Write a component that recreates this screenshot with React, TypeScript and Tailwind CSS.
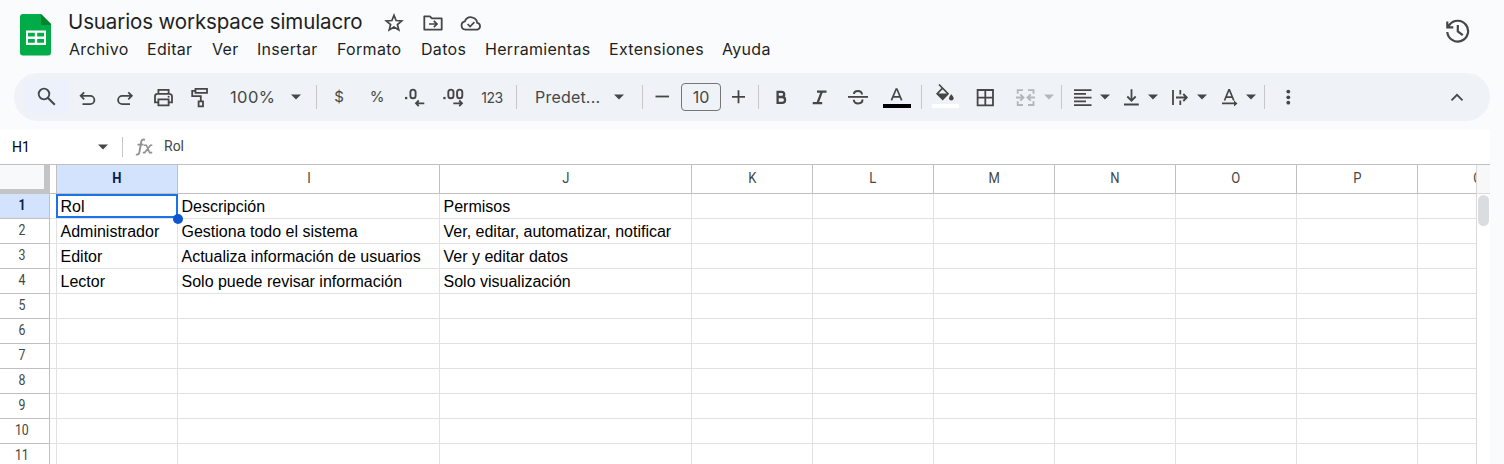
import React from "react";

type IconProps = { children: React.ReactNode; className?: string; w?: number; h?: number };

const Icon = ({ children, className = "", w = 24, h = 24 }: IconProps) => (
  <svg
    width={w}
    height={h}
    viewBox={`0 0 ${w} ${h}`}
    fill="none"
    stroke="currentColor"
    strokeWidth="1.8"
    className={`shrink-0 ${className}`}
  >
    {children}
  </svg>
);

const Caret = ({ className = "" }: { className?: string }) => (
  <Icon w={10} h={6} className={className}>
    <path d="M0 .5h10L5 5.5z" fill="currentColor" stroke="none" />
  </Icon>
);

const Divider = ({ className = "" }: { className?: string }) => (
  <div className={`h-6 w-px shrink-0 bg-[#c7c7c7] ${className}`} />
);

const menus = [
  { label: "Archivo", cls: "w-[78px]" },
  { label: "Editar", cls: "w-[65px]" },
  { label: "Ver", cls: "w-[45px]" },
  { label: "Insertar", cls: "w-[80px]" },
  { label: "Formato", cls: "w-[84px]" },
  { label: "Datos", cls: "w-[64px]" },
  { label: "Herramientas", cls: "w-[124px]" },
  { label: "Extensiones", cls: "w-[113px]" },
  { label: "Ayuda", cls: "w-[60px]" },
];

const columns = [
  { name: "H", cls: "w-[121px]" },
  { name: "I", cls: "w-[262px]" },
  { name: "J", cls: "w-[252px]" },
  { name: "K", cls: "w-[121px]" },
  { name: "L", cls: "w-[121px]" },
  { name: "M", cls: "w-[121px]" },
  { name: "N", cls: "w-[121px]" },
  { name: "O", cls: "w-[121px]" },
  { name: "P", cls: "w-[121px]" },
  { name: "Q", cls: "w-[121px]" },
];

const data: string[][] = [
  ["Rol", "Descripción", "Permisos"],
  ["Administrador", "Gestiona todo el sistema", "Ver, editar, automatizar, notificar"],
  ["Editor", "Actualiza información de usuarios", "Ver y editar datos"],
  ["Lector", "Solo puede revisar información", "Solo visualización"],
];

const rows = Array.from({ length: 11 }, (_, i) => i);

function Header() {
  return (
    <header className="flex h-[73px] items-start">
      <Icon w={31} h={42} className="ml-5 mt-[14px]">
        <path d="M3 0h18l10 10v28.500a3 3 0 0 1-3 3H3a3 3 0 0 1-3-3V3a3 3 0 0 1 3-3z" fill="#00ac47" stroke="none" />
        <path d="M21 0l10 10v1H21z" fill="#00832d" stroke="none" />
        <path d="M6 16.500h20V31H6zM8 18.700v3.800h6.800v-3.800zM17.200 18.700v3.800H24v-3.800zM8 24.900v3.800h6.800v-3.800zM17.200 24.900v3.800H24v-3.800z" fill="#fff" fillRule="evenodd" stroke="none" />
      </Icon>
      <div className="ml-[17px] flex flex-col">
        <div className="flex h-9 items-center pt-[7px]">
          <h1 className="w-[315px] whitespace-nowrap text-[20.500px] leading-7 tracking-[-0.12px] text-[#1f1f1f]">
            Usuarios workspace simulacro
          </h1>
          <div className="flex items-center text-[#444746]">
            <Icon className="-ml-px mt-[3px]">
              <path d="M12 4.300l2.100 5.200 5.600.4-4.300 3.600 1.400 5.500-4.800-3-4.800 3 1.400-5.500-4.300-3.600 5.600-.4z" strokeWidth="1.700" />
            </Icon>
            <Icon className="ml-[15px] mt-[3px]">
              <path d="M3.300 5.400h5.600l2 2h9.800v11.200H3.300z" strokeWidth="1.800" strokeLinejoin="round" />
              <path d="M8 13h7.500M12.800 9.800l3.200 3.200-3.200 3.200" strokeWidth="1.700" />
            </Icon>
            <Icon className="ml-[14px] mt-[3px]">
              <path d="M6.500 18.600a4.200 4.200 0 0 1-.6-8.300 6.400 6.400 0 0 1 12.300 1.500 3.500 3.500 0 0 1 .3 6.800z" strokeWidth="1.800" />
              <path d="M8.600 13l2.500 2.500 4.300-4.400" strokeWidth="1.600" />
            </Icon>
          </div>
        </div>
        <nav className="flex pl-px pt-px text-[16px] leading-6 tracking-[0.3px] text-[#1f1f1f]">
          {menus.map((m) => (
            <span key={m.label} className={`shrink-0 whitespace-nowrap ${m.cls}`}>
              {m.label}
            </span>
          ))}
        </nav>
      </div>
      <Icon w={26} h={26} className="ml-auto mr-[34px] mt-[18px] text-[#444746]">
        <path d="M3.300 14a10.400 10.400 0 1 0 2.200-7.300L3 9.500M3.300 3.400v6h6" strokeWidth="2.200" />
        <path d="M13.800 7v6.500l5 3.600" strokeWidth="2.200" />
      </Icon>
    </header>
  );
}

function Toolbar() {
  return (
    <div className="ml-[14px] flex h-12 w-[1476px] items-center rounded-full bg-[#eff3f8] text-[#444746]">
      <div className="ml-[11px] flex h-[34px] w-11 items-center justify-center bg-[#ecf1fb]">
        <Icon>
          <circle cx="9" cy="9" r="5.300" />
          <path d="M12.800 12.800l7 7" strokeWidth="2" />
        </Icon>
      </div>
      <Icon className="ml-[6px]">
        <path d="M9.200 7.300L5.700 10.800l3.500 3.500M6 10.800h9.200a4.200 4.200 0 0 1 0 8.400H7.500" />
      </Icon>
      <Icon className="ml-[14px]">
        <path d="M15.300 7.300l3.500 3.500-3.500 3.500M18.500 10.800H9.300a4.200 4.200 0 0 0 0 8.400h7.700" />
      </Icon>
      <Icon className="ml-[14px]">
        <path d="M7.400 8.700V4.900h10.200v3.800M7.400 17.300H4V11.300a2.500 2.500 0 0 1 2.500-2.500h12a2.500 2.500 0 0 1 2.500 2.500v6h-3.400M7.400 14.400h10.200v6H7.400z" />
        <circle cx="17.600" cy="11.800" r="1" fill="currentColor" stroke="none" />
      </Icon>
      <Icon className="ml-3">
        <path d="M8.500 3.900H20v4H8.500zM8.500 5.900H5.200v5.200h8.600v5M11.600 16.300H16v5h-4.400z" />
      </Icon>
      <span className="ml-[19px] w-[45px] text-[16.500px] tracking-[0.4px]">100%</span>
      <Caret className="ml-4" />
      <Divider className="ml-[15px]" />
      <span className="ml-[10px] w-6 text-center text-[15px]">$</span>
      <span className="ml-[14px] w-6 text-center text-[15px]">%</span>
      <Icon className="ml-[14px]">
        <path d="M2 11.900h2.300v2.300H2z" fill="currentColor" stroke="none" />
        <rect x="7.400" y="4.600" width="5.200" height="8.700" rx="2.600" strokeWidth="1.900" />
        <path d="M21.300 18.300h-8M15.800 15.500L13 18.300l2.800 2.800" />
      </Icon>
      <Icon className="ml-[15px]">
        <path d="M1.300 11.900h2.300v2.300H1.300z" fill="currentColor" stroke="none" />
        <rect x="6.300" y="4.600" width="5.200" height="8.700" rx="2.600" strokeWidth="1.900" />
        <rect x="15.100" y="4.600" width="5.200" height="8.700" rx="2.600" strokeWidth="1.900" />
        <path d="M11.300 18.300h8.500M17.200 15.500l2.800 2.800-2.800 2.800" />
      </Icon>
      <span className="ml-[14px] flex w-6 justify-center text-[14px] tracking-[-0.4px]">123</span>
      <Divider className="ml-3" />
      <span className="ml-[18px] w-[67px] whitespace-nowrap text-[16px] tracking-[0.2px]">Predet...</span>
      <Caret className="ml-3" />
      <Divider className="ml-[18px]" />
      <Icon className="ml-[7px]">
        <path d="M5.500 11.500h13.500" />
      </Icon>
      <span className="ml-[7px] flex h-7 w-10 items-center justify-center rounded-[4px] border border-[#747775] text-[16px]">
        10
      </span>
      <Icon className="ml-[5px]">
        <path d="M6 11.800h13M12.500 5.300v13" />
      </Icon>
      <Divider className="ml-2" />
      <Icon className="ml-[10px]">
        <path d="M8.600 6.800h4a2.600 2.600 0 0 1 0 5.200h-4zM8.600 12h4.600a2.900 2.900 0 0 1 0 5.800H8.600z" strokeWidth="2.300" />
      </Icon>
      <Icon className="ml-[14px]">
        <path d="M10 6.600h9.500M5.700 18.200h9.500M14.800 6.600l-4.300 11.600" strokeWidth="2.300" />
      </Icon>
      <Icon className="ml-[15px]">
        <path d="M2 11.900h20" />
        <path d="M16 9.400c0-1.800-1.500-3.400-4-3.400S8 7.500 8 9.100M7.800 14.800c0 2 1.700 3.700 4.300 3.700s4.400-1.400 4.400-3.900" strokeWidth="2" />
      </Icon>
      <Icon w={28} h={28} className="ml-[13px]">
        <path d="M8.400 17.300L13.200 6h.7L18.700 17.300M9.800 13.800h7.500" strokeWidth="1.700" />
        <path d="M0 21h28v4H0z" fill="#000" stroke="none" />
      </Icon>
      <Divider className="ml-[10px]" />
      <Icon w={27} h={28} className="ml-[10px]">
        <path d="M7 1.500l9 9.200-5.300 5.500-5.500-5.500 5.300-5.500" strokeWidth="1.700" />
        <path d="M4.800 10.500h11.500l-5.600 5.900z" fill="currentColor" stroke="none" />
        <path d="M19.300 11.200s2.300 2.500 2.300 4a2.300 2.300 0 0 1-4.600 0c0-1.500 2.300-4 2.300-4z" fill="currentColor" stroke="none" />
        <path d="M0 21h27v4H0z" fill="#fff" stroke="none" />
      </Icon>
      <Icon className="ml-[14px]">
        <path d="M4.600 5h15.400v15.400H4.600zM12.300 5v15.400M4.600 12.700h15.400" />
      </Icon>
      <Icon className="ml-4 text-[#b4b7ba]">
        <path d="M10 5.100H4.700V8.800M15 5.100h5.500V8.800M10 20H4.700V16.200M15 20h5.500V16.200M3 12.500h7M7.300 9.300l3.200 3.200-3.200 3.200M22 12.500h-7M17.700 9.300l-3.200 3.200 3.200 3.200" strokeWidth="1.900" />
      </Icon>
      <Caret className="ml-[7px] text-[#b4b7ba]" />
      <Divider className="ml-[7px]" />
      <Icon className="ml-[9px]">
        <path d="M3 5.100h17.500M3 8.900h12M3 12.600h17.500M3 16.400h12M3 20.100h17.500" strokeWidth="1.800" />
      </Icon>
      <Caret className="ml-[5px]" />
      <Icon className="ml-[9px]">
        <path d="M12.500 4.200v11.500M8.300 11.500l4.200 4.200 4.200-4.200M5 19.500h14.800" />
      </Icon>
      <Caret className="ml-[5px]" />
      <Icon className="ml-[10px]">
        <path d="M5 5v15M12.300 5v4.500M12.300 15.500V20M8 12.500h10.500M15.300 9l3.500 3.500-3.500 3.500" strokeWidth="1.800" />
      </Icon>
      <Caret className="ml-[5px]" />
      <Icon className="ml-[11px]">
        <path d="M6.500 15.500L10.900 4.800h.5l4.400 10.700M8 12.200h6.300M4 18.400h14" strokeWidth="1.700" />
        <path d="M16 15.400l3.500 3-3.500 3z" fill="currentColor" stroke="none" />
      </Icon>
      <Caret className="ml-1" />
      <Divider className="ml-2" />
      <Icon className="ml-[11px]">
        <g fill="currentColor" stroke="none">
          <circle cx="12.300" cy="6.600" r="1.900" />
          <circle cx="12.300" cy="12.300" r="1.900" />
          <circle cx="12.300" cy="17.700" r="1.900" />
        </g>
      </Icon>
      <Icon className="ml-[145px]">
        <path d="M6.500 15.300L12 9.800l5.500 5.500" />
      </Icon>
    </div>
  );
}

function FormulaBar() {
  return (
    <div className="flex h-[34px] items-center text-[#444746]">
      <span className="ml-3 w-[86px] text-[14px] text-black">H1</span>
      <Caret />
      <div className="ml-[14px] h-5 w-px bg-[#c7c7c7]" />
      <Icon w={18} h={18} className="ml-[12px] mr-[11px] text-[#8f9291]">
        <path d="M1 16.300c1.800.9 3-.1 3.400-2.200L6.200 4c.4-2 1.700-2.900 3.800-2.200M2.500 6.600h6" strokeWidth="1.900" />
        <path d="M8.800 7.200h2.600l3.200 7.400h2.600M17.300 7.200h-1.800L9.700 14.600H7.800" strokeWidth="1.600" />
      </Icon>
      <span className="-mt-[2px] text-[14px]">Rol</span>
    </div>
  );
}

function Grid() {
  return (
    <div className="flex h-[300px] w-[1490px] border-t border-[#c0c0c0]">
      <div className="w-[1476px] shrink-0 overflow-hidden">
        <div className="flex h-[29px] w-[1600px] text-[14px] text-[#444746]">
          <div className="w-[50px] shrink-0 border-b-[5px] border-r-[6px] border-[#c4c4c4] bg-[#f8f9fa]" />
          <div className="w-[7px] shrink-0 border-b border-r border-[#c0c0c0]" />
          {columns.map((c, i) => (
            <div
              key={c.name}
              className={`flex shrink-0 items-center justify-center border-b border-r border-[#c0c0c0] ${c.cls} ${
                i === 0 ? "bg-[#d3e3fd] font-bold text-[#041e49]" : ""
              }`}
            >
              <span className="-mt-px scale-x-[0.93]">{c.name}</span>
            </div>
          ))}
        </div>
        {rows.map((r) => (
          <div key={r} className="flex h-[25px] w-[1600px]">
            <div
              className={`flex w-[50px] shrink-0 items-center justify-center border-b border-r border-[#c0c0c0] pr-[5px] text-[14px] ${
                r === 0 ? "bg-[#d3e3fd] font-bold text-[#041e49]" : "text-[#444746]"
              }`}
            >
              <span className="-mt-px scale-x-[0.88]">{r + 1}</span>
            </div>
            <div className="w-[7px] shrink-0 border-b border-r border-[#e1e1e1]" />
            {columns.map((c, i) => (
              <div
                key={c.name}
                className={`relative flex shrink-0 items-center whitespace-nowrap border-b border-r border-[#e1e1e1] pl-[3.500px] pt-[2px] text-[16px] leading-[22px] text-black [font-family:'Liberation_Sans',sans-serif] ${c.cls}`}
              >
                {data[r]?.[i]}
                {r === 0 && i === 0 && (
                  <>
                    <div className="absolute -left-px top-0 h-6 w-[122px] border-2 border-[#1a73e8]" />
                    <div className="absolute left-[116px] top-[20px] z-10 h-[10px] w-[10px] rounded-full bg-[#0b57d0]" />
                  </>
                )}
              </div>
            ))}
          </div>
        ))}
      </div>
      <div className="w-[14px] shrink-0 border-l border-[#d9d9d9]">
        <div className="h-[29px] border-b border-[#d9d9d9] bg-[#f8f8f8]" />
        <div className="ml-px mt-px h-[31px] w-[11px] rounded-full bg-[#dadce0]" />
      </div>
    </div>
  );
}

export default function App() {
  return (
    <div className="h-[464px] w-[1504px] overflow-hidden bg-[#f9fbfd] [font-family:Inter,sans-serif]">
      <Header />
      <Toolbar />
      <main className="mt-[9px] h-[334px] w-[1490px] bg-white [font-family:Roboto,sans-serif]">
        <FormulaBar />
        <Grid />
      </main>
    </div>
  );
}
